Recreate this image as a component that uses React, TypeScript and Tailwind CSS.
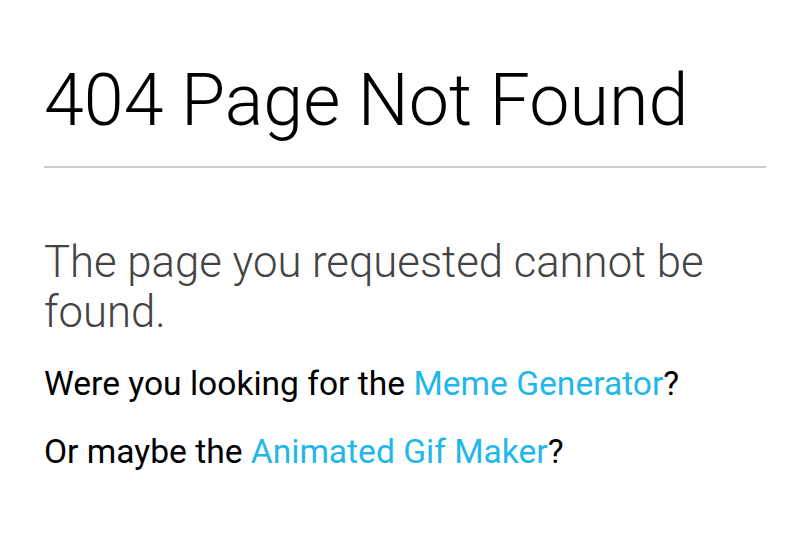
export default function App() {
  return (
    <div className="min-h-[535px] bg-white px-[44px] pt-[65px] font-['Roboto',sans-serif]">
      <h1 className="text-[71.8px] font-light leading-[72px] text-black">404 Page Not Found</h1>
      <hr className="mt-[29px] border-0 border-t-2 border-[#cccccc]" />
      <h2 className="mt-[69px] text-[43.7px] font-light leading-[50px] text-[#444444]">
        The page you requested cannot be found.
      </h2>
      <p className="mt-[27px] text-[33.6px] leading-[40px] text-black">
        Were you looking for the <a className="text-[#1fb8e8]">Meme Generator</a>?
      </p>
      <p className="mt-[28px] text-[33.6px] leading-[40px] text-black">
        Or maybe the <a className="text-[#1fb8e8]">Animated Gif Maker</a>?
      </p>
    </div>
  );
}
